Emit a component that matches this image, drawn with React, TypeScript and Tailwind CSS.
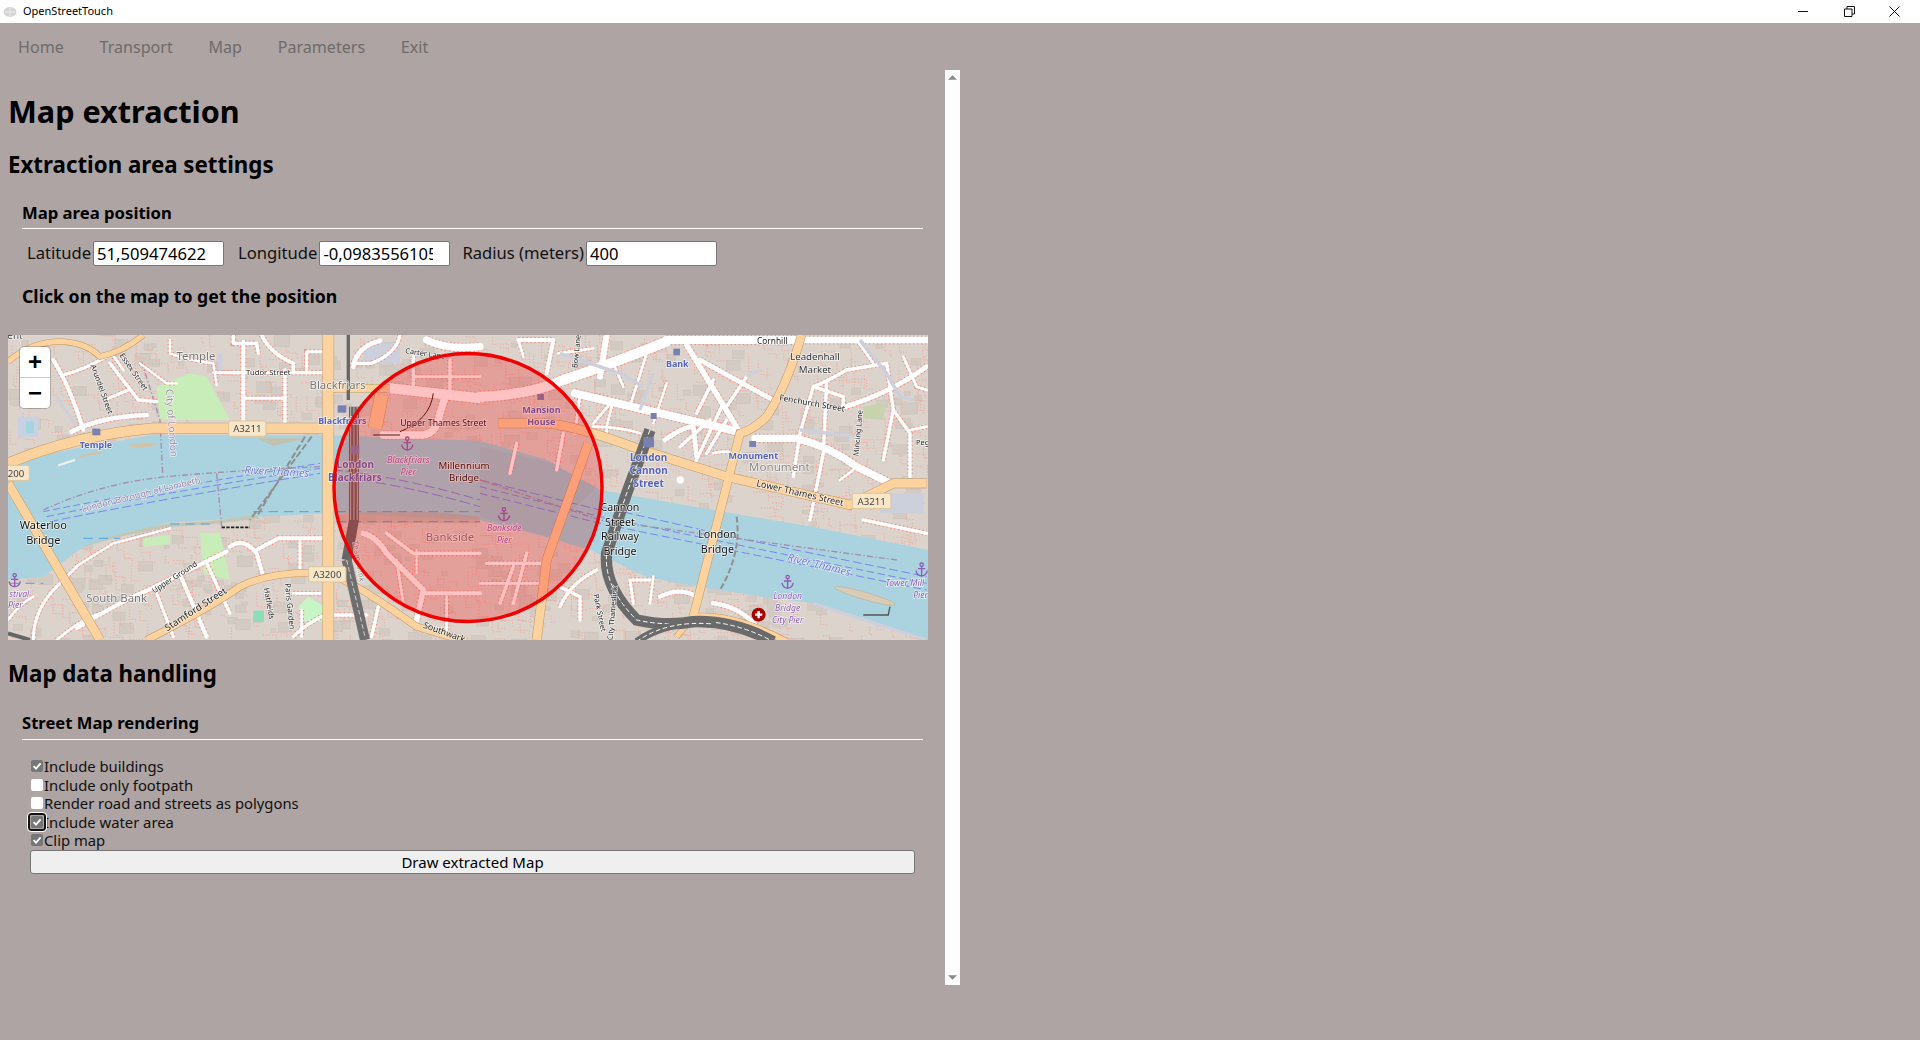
import React from "react";

type Seg = [string, number];
type Lab = [string, number, number, number, string, number?, ("b" | "i")?];

const WEST = "translate(-8 -15) scale(0.3333)";
const EAST = "translate(472 -15) scale(0.3333)";

const RIVER =
  "M0 128 L69 113 L145 100 L225 100 L312 100 L472 106 L539 125 L592 155 L705 175 L805 192 L920 215 L920 305 L805 268 L755 262 L692 252 L639 242 L582 215 L539 202 L472 185 L325 178 L245 182 L159 188 L75 212 L35 242 L0 245 Z";

const whiteW: Seg[] = [
  ["M160 120 Q210 200 250 330", 12],
  ["M190 165 Q250 150 320 110", 9],
  ["M330 130 L415 240 L470 245", 10],
  ["M325 235 L385 210", 9],
  ["M215 335 Q300 290 440 285", 14],
  ["M335 100 L370 150", 8],
  ["M420 130 L500 190 H530", 7],
  ["M510 60 V100 Q560 120 640 130 L650 195", 7],
  ["M640 158 H700", 8],
  ["M700 45 V70 H770 L775 100", 10],
  ["M730 65 V300", 12],
  ["M855 150 V305", 10],
  ["M670 158 H985", 10],
  ["M730 235 H855", 9],
  ["M785 45 Q810 100 880 130 V158", 11],
  ["M920 158 V95 H985", 9],
  ["M1060 140 Q1070 80 1140 62", 14],
  ["M1060 130 H1115", 10],
  ["M1200 45 Q1190 100 1115 130", 10],
  ["M1280 60 Q1340 90 1440 80", 22],
  ["M1170 205 L1440 235", 30],
  ["M1150 345 H1270 Q1310 340 1320 280 L1335 232", 22],
  ["M230 925 Q350 850 455 805 L680 695", 12],
  ["M100 960 Q100 870 170 800 L235 735", 9],
  ["M235 735 L340 670 L510 625", 7],
  ["M170 960 Q240 900 300 880", 8],
  ["M24 900 Q60 850 100 830", 8],
  ["M880 820 H960", 8],
  ["M905 870 V950", 8],
  ["M690 680 Q730 650 770 700 L790 770", 12],
  ["M770 690 L835 655 H970", 12],
  ["M900 660 V745", 9],
  ["M620 730 L690 880", 10],
  ["M545 775 L620 950", 12],
  ["M470 820 L520 950", 9],
  ["M880 950 Q920 910 975 885", 10],
  ["M995 885 H1100", 10],
  ["M1115 950 L1135 860", 10],
  ["M1090 640 Q1130 650 1160 700 L1270 810 L1250 900", 16],
  ["M1160 640 L1240 700 H1440", 10],
  ["M1270 820 H1440", 12],
  ["M1190 720 L1210 850", 8],
  ["M1240 110 V200", 10],
  ["M1350 120 V210", 10],
  ["M1240 170 H1440", 8],
  ["M1250 690 V760", 6],
  ["M1340 830 V940", 8],
];

const whiteE: Seg[] = [
  ["M0 230 Q150 225 250 180 Q400 130 560 65", 30],
  ["M560 60 H950", 24],
  ["M975 60 H1340", 20],
  ["M620 75 L775 330", 16],
  ["M285 220 Q500 270 775 335", 24],
  ["M825 355 H950 Q1050 380 1130 440 L1230 490", 22],
  ["M660 120 Q750 170 880 240", 14],
  ["M1090 262 Q1230 220 1340 140", 14],
  ["M1090 262 V230 L1000 200 Q1030 190 1100 150 L1220 130", 10],
  ["M1220 130 L1240 270 L1210 420", 10],
  ["M1000 200 L960 340 L940 470", 10],
  ["M1040 190 L1030 400 L990 600", 10],
  ["M115 60 H220 L200 160", 12],
  ["M380 45 L360 170", 18],
  ["M340 310 L400 240 L380 320 V360", 8],
  ["M480 340 Q420 320 340 320", 8],
  ["M555 360 Q610 320 640 320 L650 410", 14],
  ["M600 380 L690 300", 10],
  ["M680 400 L740 300", 10],
  ["M640 440 L730 250", 10],
  ["M650 280 L700 180", 10],
  ["M740 260 L800 170", 10],
  ["M1150 600 L1340 640", 10],
  ["M1240 270 L1290 340 V470", 10],
  ["M1130 60 L1180 130", 8],
  ["M1270 110 L1310 200 L1340 210", 8],
  ["M1290 330 L1340 320", 8],
  ["M400 130 L430 200", 8],
  ["M500 100 L450 260", 8],
  ["M235 100 L340 85", 8],
  ["M115 60 L130 110", 8],
  ["M300 225 L285 340", 8],
  ["M560 190 L520 310", 7],
  ["M700 400 Q730 390 780 400", 8],
  ["M1080 480 L1120 450", 8],
  ["M240 800 L300 830 V900", 10],
  ["M240 860 Q270 790 350 750", 10],
  ["M460 850 L450 780 H510", 9],
  ["M520 770 L510 850", 8],
  ["M540 830 Q600 800 650 830", 12],
  ["M700 850 Q780 860 830 920", 14],
  ["M100 740 L60 850", 10],
  ["M140 700 L100 850", 10],
  ["M20 730 H200", 10],
  ["M0 790 H180", 8],
  ["M110 370 L90 460", 10],
  ["M250 340 L230 450", 10],
];

const lilacW: Seg[] = [
  ["M170 230 L230 320", 9],
  ["M660 160 V100", 14],
];

const lilacE: Seg[] = [
  ["M240 100 L420 160 L490 200", 10],
  ["M960 330 L1130 350", 10],
  ["M520 160 L480 270", 9],
  ["M1140 60 L1220 160 L1260 230 L1300 240", 10],
  ["M1000 850 L1340 960", 9],
  ["M840 150 L800 170", 8],
];

const peachW: Seg[] = [
  ["M24 125 Q100 60 190 65 Q260 70 300 110 Q370 95 430 45", 16],
  ["M24 430 Q230 345 460 325 H985", 30],
  ["M24 490 L300 960", 26],
  ["M440 960 Q620 870 720 800 Q820 750 985 760 Q1070 790 1250 920 L1400 965", 20],
  ["M985 45 V960", 32],
  ["M985 205 H1170", 22],
  ["M1145 225 L1125 325", 40],
];

const peachE: Seg[] = [
  ["M55 310 H200 Q300 320 470 385 L740 470 L1110 555 Q1200 510 1240 490 H1340", 26],
  ["M965 45 Q920 200 860 290 Q820 330 780 340 L640 890", 24],
  ["M640 890 Q760 880 920 965", 18],
  ["M640 890 L590 950", 16],
  ["M325 370 L200 720 L170 960", 26],
];

const water: string[] = [
  "M130 575 Q400 520 960 430",
  "M140 590 Q420 530 960 445",
  "M150 605 Q440 545 960 460",
  "M1000 450 Q1200 470 1440 540",
  "M1000 470 Q1200 490 1440 560",
];

const waterE: string[] = [
  "M0 500 L360 590 L800 680 L1340 790",
  "M0 520 L360 610 L800 700 L1340 810",
  "M360 560 L800 660 L1340 770",
  "M0 480 L360 570",
];

const shoreW: string[] = ["M30 790 H130", "M250 655 H360", "M510 612 H640", "M760 575 H960", "M1010 575 H1440", "M1010 605 H1440"];

const labelsW: Lab[] = [
  ["ent", 45, 56, 30, "#555"],
  ["Temple", 588, 120, 34, "#777"],
  ["Tudor Street", 805, 166, 23, "#222"],
  ["Blackfriars", 1013, 208, 34, "#777"],
  ["Blackfriars", 1027, 313, 27, "#5463bb", 0, "b"],
  ["Temple", 288, 385, 27, "#5463bb", 0, "b"],
  ["River Thames", 830, 466, 33, "#6d7ccf", 3, "i"],
  ["London Borough of Lambeth", 425, 532, 27, "#9a7fa0", -14],
  ["Waterloo", 130, 628, 33, "#111"],
  ["Bridge", 130, 672, 33, "#111"],
  ["London", 1066, 444, 30, "#5463bb", 0, "b"],
  ["Blackfriars", 1065, 483, 30, "#5463bb", 0, "b"],
  ["Blackfriars", 1225, 430, 27, "#8e5bb5", 0, "i"],
  ["Pier", 1225, 466, 27, "#8e5bb5", 0, "i"],
  ["Millennium", 1392, 447, 29, "#111"],
  ["Bridge", 1392, 484, 29, "#111"],
  ["Upper Thames Street", 1330, 318, 26, "#111"],
  ["Carter Lane", 1275, 108, 22, "#222", 8],
  ["Bankside", 1350, 662, 34, "#777"],
  ["South Bank", 350, 846, 34, "#777"],
  ["Upper Ground", 528, 778, 23, "#222", -33],
  ["Stamford Street", 592, 876, 29, "#222", -33],
  ["Hatfields", 800, 852, 23, "#222", 80],
  ["Paris Garden", 862, 860, 23, "#222", 84],
  ["Arundel Street", 298, 210, 23, "#222", 70],
  ["Essex Street", 395, 160, 23, "#222", 55],
  ["City of London", 505, 310, 30, "#a08aa8", 86],
  ["stival", 58, 830, 26, "#8e5bb5", 0, "i"],
  ["Pier", 46, 865, 26, "#8e5bb5", 0, "i"],
  ["Thameslink", 1068, 725, 23, "#777", 80],
  ["Southwark", 1330, 945, 26, "#222", 20],
];

const labelsE: Lab[] = [
  ["Cornhill", 877, 72, 25, "#222"],
  ["Leadenhall", 1005, 120, 29, "#333"],
  ["Market", 1005, 158, 29, "#333"],
  ["Bank", 592, 142, 27, "#5463bb", 0, "b"],
  ["Bow Lane", 297, 95, 22, "#222", -84],
  ["Fenchurch Street", 995, 258, 25, "#222", 10],
  ["Mincing Lane", 1142, 340, 22, "#222", -85],
  ["Peg", 1328, 375, 22, "#222"],
  ["Mansion", 184, 279, 27, "#5463bb", 0, "b"],
  ["House", 184, 315, 27, "#5463bb", 0, "b"],
  ["London", 506, 422, 30, "#5463bb", 0, "b"],
  ["Cannon", 506, 462, 30, "#5463bb", 0, "b"],
  ["Street", 506, 501, 30, "#5463bb", 0, "b"],
  ["Monument", 820, 418, 27, "#5463bb", 0, "b"],
  ["Monument", 898, 452, 35, "#888"],
  ["Lower Thames Street", 958, 528, 27, "#222", 13],
  ["Cannon", 420, 574, 32, "#111"],
  ["Street", 420, 617, 32, "#111"],
  ["Railway", 420, 661, 32, "#111"],
  ["Bridge", 420, 704, 32, "#111"],
  ["London", 712, 654, 32, "#111"],
  ["Bridge", 712, 698, 32, "#111"],
  ["River Thames", 1015, 745, 33, "#6d7ccf", 14, "i"],
  ["Bankside", 73, 634, 26, "#8e5bb5", 0, "i"],
  ["Pier", 73, 669, 26, "#8e5bb5", 0, "i"],
  ["London", 923, 838, 26, "#8e5bb5", 0, "i"],
  ["Bridge", 923, 874, 26, "#8e5bb5", 0, "i"],
  ["City Pier", 923, 910, 26, "#8e5bb5", 0, "i"],
  ["Tower Mill", 1275, 799, 26, "#8e5bb5", 0, "i"],
  ["Pier", 1322, 834, 26, "#8e5bb5", 0, "i"],
  ["Park Street", 352, 880, 22, "#222", 78],
  ["City Thameslink", 405, 880, 22, "#222", -85],
];

// scattered footway bits and building blocks, hidden by the river where they fall on it
const specks = Array.from({ length: 1700 }, (_, i) => {
  const a = Math.abs(Math.sin(i * 12.9898) * 43758.5453) % 1;
  const b = Math.abs(Math.sin(i * 78.233) * 24634.6345) % 1;
  const c = Math.abs(Math.sin(i * 37.719) * 9631.177) % 1;
  const x = a * 920;
  const y = b * 305;
  const l = 5 + c * 11;
  return { x, y, l, up: i % 2 === 0, block: i % 4 === 0 };
});

function Label({ l }: { l: Lab }) {
  const [text, x, y, size, color, rot, kind] = l;
  return (
    <text
      x={x}
      y={y}
      fontSize={size}
      fill={color}
      fontWeight={kind === "b" ? 700 : 400}
      fontStyle={kind === "i" ? "italic" : "normal"}
      textAnchor="middle"
      stroke="#ffffff"
      strokeOpacity={0.75}
      strokeWidth={4}
      paintOrder="stroke"
      transform={rot ? `rotate(${rot} ${x} ${y})` : undefined}
    >
      {text}
    </text>
  );
}

function Shield({ x, y, text, w = 112 }: { x: number; y: number; text: string; w?: number }) {
  return (
    <g>
      <rect x={x - w / 2} y={y - 23} width={w} height={46} rx={6} fill="#f8e6c8" stroke="#dcc49a" strokeWidth={3} />
      <text x={x} y={y + 11} fontSize={29} fill="#444" textAnchor="middle">
        {text}
      </text>
    </g>
  );
}

function Anchor({ x, y }: { x: number; y: number }) {
  return (
    <g stroke="#8e5bb5" strokeWidth={4} fill="none">
      <circle cx={x} cy={y - 16} r={5} />
      <path d={`M${x} ${y - 11} V${y + 18} M${x - 11} ${y - 4} H${x + 11} M${x - 17} ${y + 2} Q${x - 14} ${y + 17} ${x} ${y + 18} Q${x + 14} ${y + 17} ${x + 17} ${y + 2}`} />
    </g>
  );
}

function Roads({ items }: { items: Seg[] }) {
  return (
    <>
      {items.map(([d, w], i) => (
        <path key={`c${i}`} d={d} fill="none" stroke="#f88f83" strokeWidth={w + 7} strokeDasharray="4 8" />
      ))}
      {items.map(([d, w], i) => (
        <path key={`w${i}`} d={d} fill="none" stroke="#ffffff" strokeWidth={w} strokeLinecap="round" strokeLinejoin="round" />
      ))}
    </>
  );
}

function Lilac({ items }: { items: Seg[] }) {
  return (
    <>
      {items.map(([d, w], i) => (
        <path key={i} d={d} fill="none" stroke="#cdd0dc" strokeWidth={w} strokeLinejoin="round" />
      ))}
    </>
  );
}

function Peach({ items }: { items: Seg[] }) {
  return (
    <>
      {items.map(([d, w], i) => (
        <path key={`c${i}`} d={d} fill="none" stroke="#c29a62" strokeWidth={w + 3} />
      ))}
      {items.map(([d, w], i) => (
        <path key={`p${i}`} d={d} fill="none" stroke="#fcd29f" strokeWidth={w} strokeLinejoin="round" />
      ))}
    </>
  );
}

function MapTiles() {
  return (
    <svg viewBox="0 0 920 305" className="block w-[920px] h-[305px] blur-[0.35px] font-['Noto_Sans']">
      <defs>
        <clipPath id="inCircle">
          <circle cx="460" cy="152.5" r="134" />
        </clipPath>
      </defs>
      <rect width="920" height="305" fill="#dbd3cc" />
      {specks.map((s, i) =>
        s.block ? (
          <rect key={i} x={s.x} y={s.y} width={s.l} height={s.l * 0.7} fill="#d3cbc3" stroke="#c8bfb6" strokeWidth={0.4} />
        ) : (
          <path
            key={i}
            d={s.up ? `M${s.x} ${s.y} h${s.l} v${s.l * 0.6}` : `M${s.x} ${s.y} v${s.l} h${s.l * 0.6}`}
            fill="none"
            stroke="#f9a094"
            strokeWidth={0.8}
            strokeDasharray="1.2 1.8"
          />
        )
      )}
      <g transform={WEST}>
        <path d="M470 200 L570 160 L620 170 L690 300 H480 Z" fill="#c9edb8" />
        <path d="M600 640 L660 640 L690 780 L610 760 Z" fill="#c9edb8" />
        <path d="M430 655 L510 645 V672 L430 680 Z" fill="#c9edb8" />
        <path d="M895 860 L925 830 L975 860 V905 L915 905 Z" fill="#c8f5c6" />
        <rect x="760" y="872" width="32" height="34" fill="#8fdcb8" />
        <rect x="55" y="290" width="60" height="60" fill="#c7d2e3" />
        <rect x="78" y="305" width="24" height="34" fill="#a5d3df" />
        <rect x="1090" y="70" width="110" height="60" fill="#ccd0dc" />
      </g>
      <g transform={EAST}>
        <path d="M1150 260 L1215 250 L1210 300 L1150 295 Z" fill="#c8d2ad" />
        <rect x="1200" y="520" width="130" height="60" fill="#ccd0dc" />
      </g>
      <path d={RIVER} fill="#aad3df" />
      <path d={RIVER} fill="#97d5e0" clipPath="url(#inCircle)" />

      <g transform={WEST}>
        <path d="M250 680 Q340 640 500 612 L640 602 L760 585 L780 596 L640 612 L500 622 Q350 650 250 680 Z" fill="#c3c6b5" />
        <path d="M770 355 H920 L820 378 Z" fill="#c2c3ae" />
        <path d="M1010 585 Q1200 560 1440 590 V610 H1010 Z" fill="#b9b3a4" opacity={0.6} />
        <ellipse cx="430" cy="375" rx="42" ry="7" fill="#cfc4a8" transform="rotate(-4 430 375)" />
        <path d="M175 436 L225 420" stroke="#eee" strokeWidth={7} />
        <path d="M235 410 L305 396" stroke="#cfc4a8" strokeWidth={7} />
        {water.map((d, i) => (
          <path key={i} d={d} fill="none" stroke="#7b84ef" strokeWidth={3} strokeDasharray={`${20 + i * 3} 11`} />
        ))}
        {shoreW.map((d, i) => (
          <path key={i} d={d} fill="none" stroke="#4da3f0" strokeWidth={3} strokeDasharray="28 18" />
        ))}
        <path d="M130 570 Q300 490 500 470 Q650 455 960 440" fill="none" stroke="#a58dab" strokeWidth={4} strokeDasharray="18 7 4 7" />
        <path d="M425 125 L480 300 L488 460" fill="none" stroke="#a58dab" strokeWidth={4} strokeDasharray="18 7 4 7" />
        <path d="M650 460 L665 620" fill="none" stroke="#a58dab" strokeWidth={4} strokeDasharray="18 7 4 7" />
        <path d="M935 350 L750 600 M915 350 L770 590" fill="none" stroke="#8f8f8f" strokeWidth={6} strokeDasharray="20 8" />
        <path d="M665 622 H750" stroke="#222" strokeWidth={5} strokeDasharray="10 4" />
      </g>
      <g transform={EAST}>
        <path d="M0 380 L200 425 L350 500 L200 650 L0 590 Z" fill="#8d8a92" opacity={0.12} />
        <ellipse cx="1155" cy="828" rx="95" ry="11" fill="#d8cdb4" stroke="#bdb49a" strokeWidth={2} transform="rotate(16 1155 828)" />
        {waterE.map((d, i) => (
          <path key={i} d={d} fill="none" stroke="#7b84ef" strokeWidth={3} strokeDasharray={`${22 + i * 2} 11`} />
        ))}
        <path d="M0 480 L360 600 L1250 720" fill="none" stroke="#a58dab" strokeWidth={4} strokeDasharray="18 7 4 7" />
        <path d="M770 590 Q785 700 720 810" fill="none" stroke="#8f8f8f" strokeWidth={6} strokeDasharray="18 8" />
        <path d="M1150 885 H1225 L1230 860" fill="none" stroke="#555" strokeWidth={4} />
      </g>

      <g transform={WEST}>
        <path d="M24 940 L90 960" stroke="#666" strokeWidth={12} />
        <Lilac items={lilacW} />
        <Roads items={whiteW} />
        <Peach items={peachW} />
        <path d="M1045 45 V240" fill="none" stroke="#666" strokeWidth={10} />
        <path d="M1062 260 V600 L1040 720" fill="none" stroke="#666" strokeWidth={30} />
        <path d="M1052 260 V600 M1062 260 V600 M1072 260 V600" fill="none" stroke="#e9dcd8" strokeWidth={2} />
        <path d="M1040 720 L1095 960" fill="none" stroke="#6f6f6f" strokeWidth={30} />
        <path d="M1040 720 L1095 950" fill="none" stroke="#fff" strokeWidth={2} strokeDasharray="14 8" />
        <rect x="1013" y="256" width="26" height="22" fill="#7981b0" />
        <rect x="277" y="326" width="24" height="20" fill="#7981b0" />
        <rect x="1052" y="376" width="26" height="26" fill="#7981b0" />
        <path d="M1120 345 H1200 M1300 220 Q1290 300 1200 335" fill="none" stroke="#222" strokeWidth={3} />
        <Shield x={742} y={326} text="A3211" />
        <Shield x={48} y={459} text="200" w={80} />
        <Shield x={982} y={763} text="A3200" />
        <Anchor x={44} y={782} />
        <Anchor x={1222} y={372} />
        {labelsW.map((l, i) => (
          <Label key={i} l={l} />
        ))}
      </g>
      <g transform={EAST}>
        <Roads items={whiteE} />
        <Lilac items={lilacE} />
        <Peach items={peachE} />
        <path d="M510 330 L440 520 L380 700 Q370 800 470 900 Q560 920 640 905 Q760 900 880 965" fill="none" stroke="#6a6a6a" strokeWidth={34} />
        <path d="M510 330 L440 520 L380 700 Q370 800 470 900 Q560 920 640 905 Q760 900 880 965" fill="none" stroke="#fff" strokeWidth={3} strokeDasharray="14 8" />
        <path d="M470 965 Q560 900 700 912" fill="none" stroke="#6a6a6a" strokeWidth={22} />
        <path d="M470 965 Q560 900 700 912" fill="none" stroke="#fff" strokeWidth={3} strokeDasharray="14 8" />
        <rect x="580" y="86" width="20" height="20" fill="#7981b0" />
        <rect x="172" y="222" width="20" height="18" fill="#7981b0" />
        <rect x="512" y="279" width="18" height="18" fill="#7981b0" />
        <rect x="490" y="352" width="32" height="30" fill="#7981b0" />
        <rect x="808" y="363" width="20" height="18" fill="#7981b0" />
        <circle cx="601" cy="480" r="11" fill="#fff" />
        <Shield x={1175} y={543} text="A3211" w={116} />
        <Anchor x={72} y={584} />
        <Anchor x={923} y={787} />
        <Anchor x={1325} y={750} />
        {labelsE.map((l, i) => (
          <Label key={i} l={l} />
        ))}
        <circle cx="836" cy="884" r="21" fill="#a90000" />
        <path d="M836 873 V895 M825 884 H847" stroke="#fff" strokeWidth={7} />
      </g>
      <circle cx="460" cy="152.5" r="134" fill="#ff0000" fillOpacity={0.24} stroke="#f00000" strokeWidth={3.4} />
    </svg>
  );
}

function Field({ label, value, gap }: { label: string; value: string; gap: string }) {
  return (
    <div className={`flex items-center gap-[2px] ${gap}`}>
      <span>{label}</span>
      <input
        readOnly
        value={value}
        className="w-[131px] h-[25px] bg-white border border-[#767676] rounded-[2px] pl-[3px] pr-[16px] text-[16.6px] text-black outline-none"
      />
    </div>
  );
}

function Check({ label, checked, focused }: { label: string; checked?: boolean; focused?: boolean }) {
  return (
    <label className="flex items-center h-[18.5px] text-[14.8px] leading-[18px]">
      <span className="relative flex w-[13px] h-[12px] shrink-0 ml-[1px]">
        <input
          type="checkbox"
          readOnly
          checked={!!checked}
          className="appearance-none w-[12px] h-[12px] m-0 rounded-[2px] bg-white checked:bg-[#767676]"
        />
        {checked && (
          <svg viewBox="0 0 12 12" className="absolute left-0 top-0 w-[12px] h-[12px]">
            <path d="M2.5 6.2L5 8.6L9.6 3.4" fill="none" stroke="#fff" strokeWidth="1.8" />
          </svg>
        )}
        {focused && (
          <span className="absolute -left-[3px] -top-[3px] w-[18px] h-[18px] z-10 border-2 border-[#111] rounded-[3px] outline outline-1 outline-white" />
        )}
      </span>
      <span>{label}</span>
    </label>
  );
}

export default function App() {
  return (
    <div className="h-[1040px] w-[1920px] overflow-hidden bg-[#aea4a3] text-[#111] font-['Noto_Sans',sans-serif]">
      {/* Title bar */}
      <div className="h-[23px] bg-white flex items-center text-[11px] text-black">
        <svg viewBox="0 0 14 12" className="w-[14px] h-[12px] ml-[3px] mr-[6px]">
          <ellipse cx="7" cy="6" rx="6.5" ry="5" fill="#d4d4d4" />
          <path d="M2 6h10M7 1.5v9" stroke="#ececec" strokeWidth="1" />
        </svg>
        <span>OpenStreetTouch</span>
        <div className="ml-auto flex items-center pr-[20px] gap-[34.5px]">
          <svg viewBox="0 0 11 11" className="w-[11px] h-[11px]">
            <path d="M0 5.5H10" stroke="#111" strokeWidth="1" />
          </svg>
          <svg viewBox="0 0 11 11" className="w-[11px] h-[11px]">
            <path d="M.5 3H8V10.5H.5ZM3 3V.5H10.5V8H8" stroke="#111" strokeWidth="1" fill="none" />
          </svg>
          <svg viewBox="0 0 11 11" className="w-[11px] h-[11px]">
            <path d="M.5.5L10.5 10.5M10.5.5L.5 10.5" stroke="#111" strokeWidth="1" fill="none" />
          </svg>
        </div>
      </div>

      {/* Menu */}
      <nav className="h-[47px] pt-[2px] flex items-center gap-[35.7px] pl-[18px] text-[16.1px] text-[#6f6b6b]">
        <span>Home</span>
        <span>Transport</span>
        <span>Map</span>
        <span>Parameters</span>
        <span>Exit</span>
      </nav>

      <div className="flex w-[960px] h-[915px]">
        <main className="w-[945px] pl-2">
          <h1 className="mt-[21px] h-[40px] leading-[40px] text-[30.6px] font-bold text-black">Map extraction</h1>
          <h2 className="mt-[19px] h-[30px] leading-[30px] text-[22.3px] font-bold text-black">Extraction area settings</h2>

          <h3 className="mt-[21px] ml-[14px] w-[901px] h-[28px] leading-[24px] border-b border-white text-[16.7px] font-bold text-black">
            Map area position
          </h3>
          <div className="mt-[12px] ml-[19px] flex items-center h-[25px] text-[16.6px]">
            <Field label="Latitude" value="51,509474622" gap="" />
            <Field label="Longitude" value="-0,09835561059" gap="ml-[14px]" />
            <Field label="Radius (meters)" value="400" gap="ml-[12px]" />
          </div>
          <h3 className="mt-[18px] ml-[14px] h-[24px] leading-[24px] text-[17.7px] font-bold text-black">
            Click on the map to get the position
          </h3>

          <div className="relative mt-[27px] w-[920px] h-[305px] overflow-hidden">
            <MapTiles />
            <div className="absolute left-[12px] top-[12px] w-[30px] rounded-[4px] bg-white text-black shadow-[0_0_0_1px_rgba(0,0,0,0.2)] font-['Liberation_Sans']">
              <div className="h-[31px] flex items-center justify-center text-[24px] font-bold border-b border-[#ccc]">+</div>
              <div className="h-[30px] flex items-center justify-center text-[24px] font-bold">−</div>
            </div>
          </div>

          <h2 className="mt-[19px] h-[30px] leading-[30px] text-[22.3px] font-bold text-black">Map data handling</h2>
          <h3 className="mt-[22px] ml-[14px] w-[901px] h-[29px] leading-[24px] border-b border-white text-[16.6px] font-bold text-black">
            Street Map rendering
          </h3>
          <div className="mt-[17px] ml-[22px] text-[#111]">
            <Check label="Include buildings" checked />
            <Check label="Include only footpath" />
            <Check label="Render road and streets as polygons" />
            <Check label="Include water area" checked focused />
            <Check label="Clip map" checked />
            <button className="block w-[885px] h-[24px] pb-[2px] bg-[#efefef] border border-[#767676] rounded-[3px] text-[15px] text-black">
              Draw extracted Map
            </button>
          </div>
        </main>

        {/* Scrollbar */}
        <div className="w-[15px] h-full bg-[#fdfdfd] flex flex-col justify-between items-center py-[5px]">
          <svg viewBox="0 0 10 5" className="w-[9px] h-[5px]">
            <path d="M0 5L5 0L10 5Z" fill="#8a8a8a" />
          </svg>
          <svg viewBox="0 0 10 5" className="w-[9px] h-[5px]">
            <path d="M0 0L5 5L10 0Z" fill="#8a8a8a" />
          </svg>
        </div>
      </div>
    </div>
  );
}
